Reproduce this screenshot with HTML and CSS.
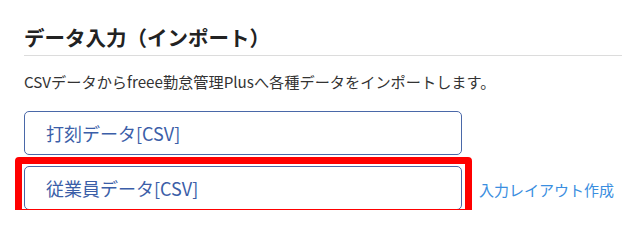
FILE: index.html
```html
<!DOCTYPE html>
<html lang="ja">
<head>
<meta charset="utf-8">
<link rel="stylesheet" href="styles.css">
</head>
<body>
<section class="panel">
  <h2 class="title">データ入力（インポート）</h2>
  <p class="desc">CSVデータからfreee勤怠管理Plusへ各種データをインポートします。</p>
  <div class="rows">
    <div class="row">
      <button class="imp-btn">打刻データ[CSV]</button>
    </div>
    <div class="row">
      <button class="imp-btn highlighted">従業員データ[CSV]</button>
      <a class="layout-link" href="#">入力レイアウト作成</a>
    </div>
  </div>
</section>
</body>
</html>
```

FILE: styles.css
```css
html, body {
  margin: 0;
  padding: 0;
  background: #ffffff;
}
body {
  font-family: "Noto Sans CJK JP", "Noto Sans", sans-serif;
  color: #333333;
}
.panel {
  padding: 22px 0 0 24px;
}
.title {
  margin: 0;
  font-size: 20.5px;
  font-weight: 700;
  line-height: 30px;
  color: #222222;
  padding-bottom: 3px;
  border-bottom: 1px solid #dcdcdc;
}
.desc {
  margin: 13px 0 0 0;
  font-size: 15.2px;
  line-height: 24px;
  color: #333333;
}
.rows {
  margin-top: 18px;
  display: flex;
  flex-direction: column;
  gap: 11px;
}
.row {
  display: flex;
  align-items: center;
  gap: 17px;
}
.imp-btn {
  width: 438px;
  height: 44px;
  box-sizing: border-box;
  border: 1px solid #4a68a8;
  border-radius: 5px;
  background: #ffffff;
  color: #3b5ea8;
  font-family: "Noto Sans CJK JP", "Noto Sans", sans-serif;
  font-size: 18px;
  text-align: left;
  padding: 0 0 0 21px;
  position: relative;
}
.highlighted::before {
  content: "";
  position: absolute;
  left: -10px;
  top: -10px;
  right: -11px;
  bottom: -7px;
  border: 7px solid #ff0000;
  border-radius: 4px;
  pointer-events: none;
}
.layout-link {
  font-size: 15px;
  color: #3a8ee0;
  text-decoration: none;
  margin-top: 2px;
}
```
